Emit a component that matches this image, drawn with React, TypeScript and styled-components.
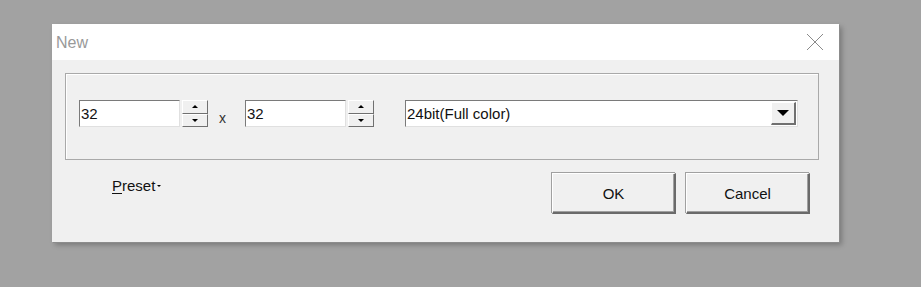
import styled, { createGlobalStyle } from 'styled-components'

const Global = createGlobalStyle`
  html, body {
    margin: 0;
    padding: 0;
    background: #a2a2a2;
    font-family: "Liberation Sans", Arial, sans-serif;
  }
`

const Desktop = styled.div`
  width: 921px;
  height: 287px;
  padding: 24px 0 0 52px;
  box-sizing: border-box;
`

const Window = styled.div`
  width: 787px;
  height: 218px;
  display: flex;
  flex-direction: column;
  background: #f0f0f0;
  box-shadow: 1px 1px 0 #8c8c8c, 3px 3px 5px rgba(0, 0, 0, 0.25);
`

const TitleBar = styled.div`
  height: 36px;
  background: #ffffff;
  display: flex;
  align-items: center;
  justify-content: space-between;
  padding: 0 15px 0 4px;
`

const Title = styled.span`
  font-size: 16px;
  color: #999999;
  margin-top: 1px;
`

const Body = styled.div`
  flex: 1;
  padding: 13px 20px 0 13px;
  display: flex;
  flex-direction: column;
`

const Group = styled.div`
  height: 87px;
  border: 1px solid #a9a9a9;
  box-shadow: inset 1px 1px 0 #ffffff;
  box-sizing: border-box;
  display: flex;
  align-items: flex-start;
  padding: 26px 20px 0 13px;
`

const Field = styled.div<{ $w: number }>`
  width: ${p => p.$w}px;
  height: 27px;
  box-sizing: border-box;
  background: #ffffff;
  border-top: 1px solid #7a7a7a;
  border-left: 1px solid #7a7a7a;
  border-right: 1px solid #e0e0e0;
  border-bottom: 1px solid #e0e0e0;
  display: flex;
  align-items: center;
  font-size: 15px;
  color: #111;
  padding-left: 1px;
`

const Spin = styled.div`
  display: flex;
  flex-direction: column;
  margin-left: 2px;
  width: 26px;
  height: 27px;
`

const SpinBtn = styled.div`
  flex: 1;
  background: #f0f0f0;
  border-top: 1px solid #ffffff;
  border-left: 1px solid #ffffff;
  border-right: 1px solid #707070;
  border-bottom: 1px solid #707070;
  display: flex;
  align-items: center;
  justify-content: center;
`

const Times = styled.span`
  font-size: 14px;
  color: #333;
  margin: 10px 19px 0 11px;
`

const Combo = styled(Field)`
  margin-left: 31px;
  justify-content: space-between;
  padding-right: 1px;
`

const ComboBtn = styled.div`
  width: 25px;
  height: 23px;
  box-sizing: border-box;
  background: #f0f0f0;
  border-top: 1px solid #ffffff;
  border-left: 1px solid #ffffff;
  border-right: 2px solid #707070;
  border-bottom: 2px solid #707070;
  display: flex;
  align-items: center;
  justify-content: center;
`

const Footer = styled.div`
  display: flex;
  align-items: flex-start;
  padding: 13px 9px 0 0;
`

const Preset = styled.div`
  margin: 4px 0 0 47px;
  font-size: 15px;
  color: #111;
  display: flex;
  align-items: center;
  gap: 2px;
  flex: 1;
  & u { text-decoration: underline; text-underline-offset: 2px; }
`

const Button = styled.div`
  width: 124px;
  height: 41px;
  box-sizing: border-box;
  background: #f0f0f0;
  border-top: 1px solid #ffffff;
  border-left: 1px solid #ffffff;
  border-right: 2px solid #6a6a6a;
  border-bottom: 2px solid #6a6a6a;
  box-shadow: inset -1px -1px 0 #a0a0a0, -1px -1px 0 #a0a0a0;
  display: flex;
  align-items: center;
  justify-content: center;
  font-size: 15px;
  color: #111;
  margin-left: 10px;
`

const Tri = ({ up, size }: { up?: boolean; size: number }) => (
  <svg width={size * 2} height={size} viewBox="0 0 2 1">
    <path d={up ? 'M0 1 L1 0 L2 1 Z' : 'M0 0 L2 0 L1 1 Z'} fill="#000" />
  </svg>
)

function SpinField({ value }: { value: string }) {
  return (
    <>
      <Field $w={101}>{value}</Field>
      <Spin>
        <SpinBtn><Tri up size={3} /></SpinBtn>
        <SpinBtn><Tri size={3} /></SpinBtn>
      </Spin>
    </>
  )
}

export default function App() {
  return (
    <Desktop>
      <Global />
      <Window>
        <TitleBar>
          <Title>New</Title>
          <svg width="18" height="18" viewBox="0 0 18 18">
            <path d="M1 1 L17 17 M17 1 L1 17" stroke="#8a8a8a" strokeWidth="1" />
          </svg>
        </TitleBar>
        <Body>
          <Group>
            <SpinField value="32" />
            <Times>x</Times>
            <SpinField value="32" />
            <Combo $w={393}>
              24bit(Full color)
              <ComboBtn><Tri size={6} /></ComboBtn>
            </Combo>
          </Group>
          <Footer>
            <Preset><span><u>P</u>reset</span><Tri size={2} /></Preset>
            <Button>OK</Button>
            <Button>Cancel</Button>
          </Footer>
        </Body>
      </Window>
    </Desktop>
  )
}
